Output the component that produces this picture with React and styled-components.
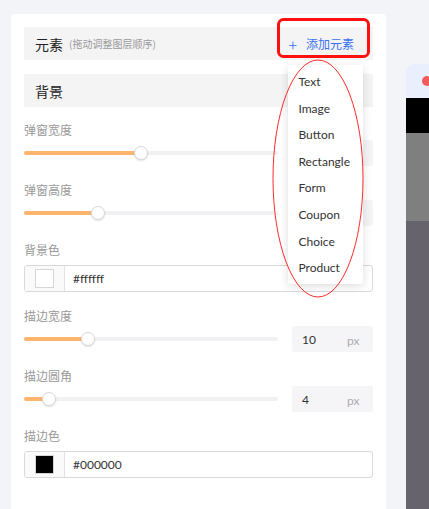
import styled, { createGlobalStyle } from "styled-components"

const GlobalStyle = createGlobalStyle`
  body {
    margin: 0;
    background: #f3f4f8;
    font-family: "Lato", "Noto Sans CJK SC", sans-serif;
    overflow: hidden;
  }
`

const menuItems = ["Text", "Image", "Button", "Rectangle", "Form", "Coupon", "Choice", "Product"]

const App = () => {
  return (
    <Page>
      <GlobalStyle />
      <Panel>
        <SectionHeader>
          <Title>元素</Title>
          <Hint>(拖动调整图层顺序)</Hint>
          <AddWrap>
            <AddButton>
              <Plus>+</Plus>添加元素
            </AddButton>
            <Menu>
              {menuItems.map((item) => (
                <MenuItem key={item}>{item}</MenuItem>
              ))}
            </Menu>
          </AddWrap>
        </SectionHeader>

        <SectionHeader $gap>
          <Title>背景</Title>
        </SectionHeader>

        {/* the first two number boxes sit under the open menu */}
        <Field $first>
          <Label>弹窗宽度</Label>
          <SliderRow value={46} />
        </Field>
        <Field>
          <Label>弹窗高度</Label>
          <SliderRow value={29} />
        </Field>
        <Field>
          <Label>背景色</Label>
          <ColorInput color="#ffffff" />
        </Field>
        <Field>
          <Label>描边宽度</Label>
          <SliderRow value={25} num="10" />
        </Field>
        <Field>
          <Label>描边圆角</Label>
          <SliderRow value={10} num="4" />
        </Field>
        <Field>
          <Label>描边色</Label>
          <ColorInput color="#000000" />
        </Field>
      </Panel>

      <Preview>
        <PreviewHead>
          <Dot />
        </PreviewHead>
        <Band $color="#000000" $h={35} />
        <Band $color="#7f7f7f" $h={88} />
        <Band $color="#67636d" $h={300} />
      </Preview>

      <Annotation width="429" height="509">
        <rect x="278.5" y="19.5" width="90" height="37" rx="5" fill="none" stroke="#ff1010" strokeWidth="3" />
        <ellipse cx="318" cy="178.5" rx="45" ry="118.5" fill="none" stroke="#ff2a2a" strokeWidth="1" />
      </Annotation>
    </Page>
  )
}

const SliderRow = ({ value, num }) => (
  <Row>
    <Track>
      <Fill style={{ width: `${value}%` }} />
      <Thumb style={{ left: `${value}%` }} />
    </Track>
    <NumBox>
      {num && (
        <>
          <NumValue>{num}</NumValue>
          <Unit>px</Unit>
        </>
      )}
    </NumBox>
  </Row>
)

const ColorInput = ({ color }) => (
  <ColorBox>
    <SwatchCell>
      <Swatch $color={color} />
    </SwatchCell>
    <ColorText>{color}</ColorText>
  </ColorBox>
)

export default App

const Page = styled.div`
  position: relative;
  display: flex;
  align-items: flex-start;
  gap: 20px;
  padding: 14px 0 0 11px;
  height: 509px;
  box-sizing: border-box;
`

const Panel = styled.div`
  width: 375px;
  flex-shrink: 0;
  min-height: 520px;
  box-sizing: border-box;
  padding: 13px 13px 0;
  background: #ffffff;
  border-radius: 4px 4px 0 0;
`

const SectionHeader = styled.div`
  position: relative;
  display: flex;
  align-items: center;
  height: 33px;
  padding-left: 11px;
  margin-top: ${(p) => (p.$gap ? "14px" : "0")};
  background: #f4f4f5;
`

const Title = styled.span`
  font-size: 14px;
  color: #222;
  font-family: "Noto Sans CJK SC", sans-serif;
`

const Hint = styled.span`
  margin-left: 6px;
  font-size: 10px;
  color: #9a9a9a;
  font-family: "Noto Sans CJK SC", sans-serif;
`

const AddWrap = styled.div`
  position: relative;
  margin-left: auto;
  margin-right: 19px;
`

const AddButton = styled.div`
  display: flex;
  align-items: center;
  font-size: 12px;
  color: #3a6ff6;
  font-family: "Noto Sans CJK SC", sans-serif;
  cursor: pointer;
`

const Plus = styled.span`
  font-size: 16px;
  font-weight: 300;
  margin-right: 9px;
  line-height: 1;
`

const Menu = styled.div`
  position: absolute;
  top: 30px;
  left: 0;
  width: 75px;
  padding: 4px 0 2px;
  background: #ffffff;
  box-shadow: 0 2px 10px rgba(0, 0, 0, 0.14);
  border-radius: 2px;
  z-index: 5;
`

const MenuItem = styled.div`
  height: 26.6px;
  line-height: 26.6px;
  padding-left: 10px;
  font-size: 12px;
  color: #333;
`

const Field = styled.div`
  margin-top: ${(p) => (p.$first ? "15px" : "16px")};
`

const Label = styled.div`
  height: 16px;
  line-height: 16px;
  font-size: 12px;
  color: #999;
  font-family: "Noto Sans CJK SC", sans-serif;
`

const Row = styled.div`
  display: flex;
  align-items: center;
  height: 26px;
  margin-top: 2px;
`

const Track = styled.div`
  position: relative;
  width: 254px;
  height: 4px;
  border-radius: 2px;
  background: #f1f1f3;
`

const Fill = styled.div`
  height: 100%;
  border-radius: 2px;
  background: #fdb46c;
`

const Thumb = styled.div`
  position: absolute;
  top: 50%;
  width: 14px;
  height: 14px;
  margin: -7px 0 0 -7px;
  box-sizing: border-box;
  border-radius: 50%;
  background: #fff;
  border: 1px solid #d8d8d8;
  box-shadow: 0 1px 2px rgba(0, 0, 0, 0.12);
`

const NumBox = styled.div`
  display: flex;
  align-items: center;
  margin-left: auto;
  width: 81px;
  height: 26px;
  background: #f5f5f8;
  border-radius: 2px;
  font-size: 12px;
`

const NumValue = styled.span`
  flex: 1;
  padding-left: 10px;
  color: #333;
`

const Unit = styled.span`
  width: 26px;
  color: #aaa;
  margin-top: 2px;
`

const ColorBox = styled.div`
  display: flex;
  align-items: center;
  height: 27px;
  margin-top: 7px;
  box-sizing: border-box;
  border: 1px solid #d9d9d9;
  border-radius: 3px;
  overflow: hidden;
`

const SwatchCell = styled.div`
  display: flex;
  align-items: center;
  justify-content: center;
  width: 39px;
  height: 100%;
  background: #fafafa;
  border-right: 1px solid #e3e3e3;
`

const Swatch = styled.div`
  width: 19px;
  height: 19px;
  box-sizing: border-box;
  border: 1px solid #d6d6d6;
  background: ${(p) => p.$color};
`

const ColorText = styled.span`
  margin-left: 8px;
  font-size: 12px;
  color: #333;
`

const Preview = styled.div`
  flex: 1;
  margin-top: 50px;
  display: flex;
  flex-direction: column;
  overflow: hidden;
  border-radius: 8px 0 0 0;
`

const PreviewHead = styled.div`
  position: relative;
  height: 34px;
  background: #e9effd;
`

const Dot = styled.div`
  position: absolute;
  left: 16px;
  top: 12px;
  width: 10px;
  height: 10px;
  border-radius: 50%;
  background: #f25b5b;
`

const Band = styled.div`
  height: ${(p) => p.$h}px;
  background: ${(p) => p.$color};
`

const Annotation = styled.svg`
  position: absolute;
  left: 0;
  top: 0;
  pointer-events: none;
  z-index: 10;
`
